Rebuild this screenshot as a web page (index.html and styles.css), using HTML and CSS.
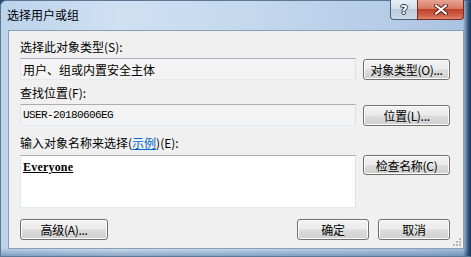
FILE: index.html
```html
<!DOCTYPE html>
<html lang="zh-CN">
<head>
    <meta charset="UTF-8">
    <title>选择用户或组</title>
    <link rel="stylesheet" href="styles.css">
</head>
<body>
<div class="window">
    <div class="titlebar">
        <span class="title">选择用户或组</span>
        <div class="controls">
            <span class="ctl help">?</span>
            <span class="ctl close">
                <svg width="14" height="11" viewBox="0 0 14 11">
                    <path d="M2 1.5 L12 9.5 M12 1.5 L2 9.5" stroke="#5a2118" stroke-width="4" stroke-linecap="round"/>
                    <path d="M2 1.5 L12 9.5 M12 1.5 L2 9.5" stroke="#fff" stroke-width="2.2" stroke-linecap="round"/>
                </svg>
            </span>
        </div>
    </div>
    <div class="client">
        <div class="label">选择此对象类型(S):</div>
        <div class="row">
            <div class="field readonly">用户、组或内置安全主体</div>
            <button class="btn side">对象类型(O)...</button>
        </div>
        <div class="label gap6">查找位置(F):</div>
        <div class="row">
            <div class="field readonly mono">USER-20180606EG</div>
            <button class="btn side">位置(L)...</button>
        </div>
        <div class="label gap10">输入对象名称来选择(<a class="link" href="#">示例</a>)(E):</div>
        <div class="row names">
            <div class="field area"><span class="mono name">Everyone</span></div>
            <button class="btn side short">检查名称(C)</button>
        </div>
        <div class="footer">
            <button class="btn wide">高级(A)...</button>
            <div class="actions">
                <button class="btn ok">确定</button>
                <button class="btn ok">取消</button>
            </div>
        </div>
        <span class="grip"></span>
    </div>
</div>
</body>
</html>
```

FILE: styles.css
```css
* {
    padding: 0;
    margin: 0;
    box-sizing: border-box;
}

body {
    width: 471px;
    height: 257px;
    overflow: hidden;
    background: #1f4a78;
    font-family: "Noto Sans CJK SC", "Liberation Sans", sans-serif;
    font-size: 12px;
    color: #000;
}

.window {
    width: 471px;
    height: 257px;
    display: flex;
    flex-direction: column;
    border-radius: 6px 6px 0 0;
    border: 1px solid #5b7897;
    border-right-color: #16375c;
    background:
        linear-gradient(90deg, rgba(20, 55, 95, 0) 0, rgba(20, 55, 95, 0) 462px, rgba(25, 60, 100, 0.9) 468px),
        linear-gradient(180deg, rgba(0, 0, 0, 0) 0, rgba(0, 0, 0, 0) 247px, rgba(40, 80, 130, 0.5) 257px),
        linear-gradient(90deg, #bcd3ec 0%, #cfe0f2 25%, #c3d8ee 55%, #b4cbe6 85%, #a7c1e0 100%);
    position: relative;
}

.titlebar {
    height: 29px;
    display: flex;
    justify-content: space-between;
    align-items: flex-start;
}

.title {
    padding: 5px 0 0 6px;
    line-height: 18px;
    font-size: 12px;
    color: #000;
}

.controls {
    display: flex;
    margin-right: 6px;
    margin-top: -1px;
}

.ctl {
    height: 20px;
    display: flex;
    align-items: center;
    justify-content: center;
    border: 1px solid #4d5f78;
    border-top: 0;
}

.help {
    width: 27px;
    border-radius: 0 0 0 4px;
    border-right: 0;
    background: linear-gradient(#e6edf5 0%, #d5dfea 45%, #bccbdc 50%, #cbd9e8 100%);
    font-family: "DejaVu Sans", sans-serif;
    font-weight: bold;
    font-size: 13px;
    color: #fff;
    text-shadow: 0 0 1px #1f2f45, 1px 0 0 #2d3f58, -1px 0 0 #2d3f58, 0 1px 0 #2d3f58, 0 -1px 0 #2d3f58;
}

.close {
    width: 47px;
    border-radius: 0 0 4px 0;
    border-color: #7a2a1e;
    background: linear-gradient(#e8a493 0%, #d67a66 45%, #c0412a 50%, #d2654c 85%, #e08a6e 100%);
}

.client {
    flex: 1;
    margin: 0 6px 7px 7px;
    background: #f0f0f0;
    border: 1px solid #8a9eb4;
    padding: 9px 13px 8px 11px;
    display: flex;
    flex-direction: column;
    position: relative;
}

.label {
    line-height: 14px;
    height: 14px;
    margin-bottom: 4px;
    white-space: nowrap;
}

.gap6 {
    margin-top: 6px;
}

.gap10 {
    margin-top: 10px;
    margin-bottom: 5px;
}

.link {
    color: #0066cc;
}

.row {
    display: flex;
    align-items: center;
    gap: 7px;
}

.names {
    align-items: flex-start;
}

.field {
    width: 337px;
    height: 22px;
    border: 1px solid;
    border-color: #abadb3 #dbdfe6 #e3e9ef #e2e3ea;
    padding: 3px 2px 0 2px;
    line-height: 15px;
    white-space: nowrap;
}

.readonly {
    background: #f3f3f3;
}

.area {
    height: 53px;
    background: #fff;
    padding-top: 2px;
}

.mono {
    font-family: "Liberation Mono", "DejaVu Sans Mono", monospace;
    font-size: 11px;
    letter-spacing: -0.6px;
}

.name {
    font-family: "Liberation Serif", serif;
    font-size: 12px;
    letter-spacing: 0.2px;
    font-weight: bold;
    text-decoration: underline;
}

.btn {
    height: 21px;
    border: 1px solid #707070;
    border-radius: 3px;
    background: linear-gradient(#f2f2f2 0%, #ebebeb 48%, #dddddd 52%, #cfcfcf 100%);
    box-shadow: inset 0 0 0 1px #fcfcfc;
    font-family: "Noto Sans CJK SC", "Liberation Sans", sans-serif;
    font-size: 12px;
    line-height: 17px;
    color: #000;
    white-space: nowrap;
    letter-spacing: -0.3px;
}

.side {
    width: 87px;
}

.short {
    height: 20px;
}

.footer {
    margin-top: 11px;
    display: flex;
    justify-content: space-between;
}

.wide {
    width: 88px;
}

.actions {
    display: flex;
    gap: 9px;
}

.ok {
    width: 72px;
}

.grip {
    position: absolute;
    right: 2px;
    bottom: 2px;
    width: 2px;
    height: 2px;
    background: #b8b8b8;
    box-shadow: -3px 0 #b8b8b8, -6px 0 #b8b8b8, 0 -3px #b8b8b8, -3px -3px #b8b8b8, 0 -6px #b8b8b8;
}
```
